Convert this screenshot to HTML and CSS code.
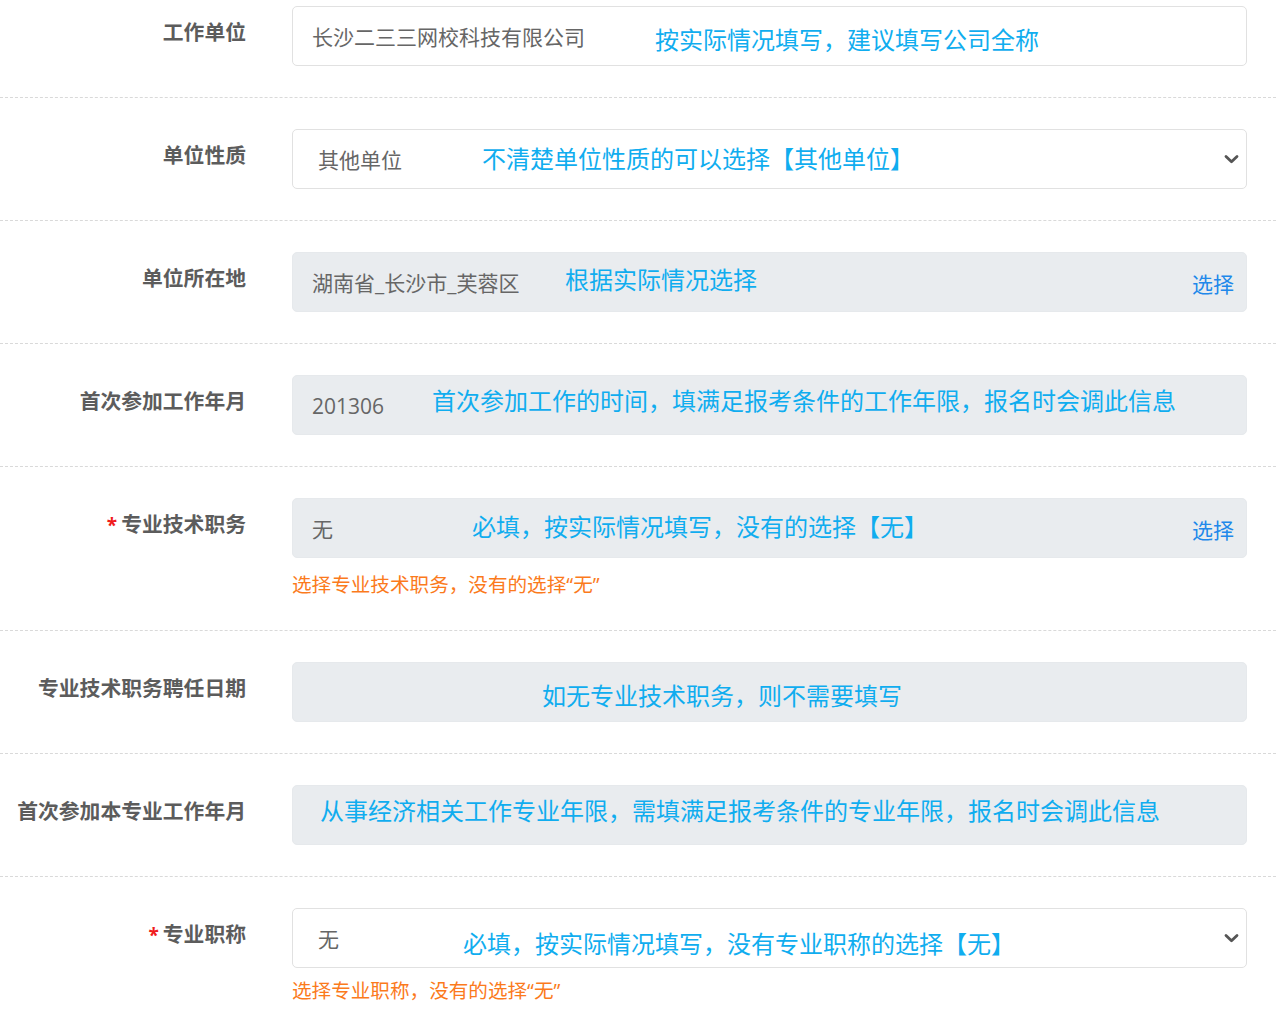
FILE: index.html
```html
<!DOCTYPE html>
<html lang="zh-CN">
<head>
<meta charset="utf-8">
<title>工作信息</title>
<link rel="stylesheet" href="styles.css">
</head>
<body>
<div class="form">
  <div class="row">
    <div class="label">工作单位</div>
    <div class="ctrl">
      <div class="field">
        <span class="value">长沙二三三网校科技有限公司</span>
        <span class="note n1">按实际情况填写，建议填写公司全称</span>
      </div>
    </div>
  </div>
  <div class="row">
    <div class="label">单位性质</div>
    <div class="ctrl">
      <div class="field">
        <span class="value v-sel">其他单位</span>
        <span class="note n2">不清楚单位性质的可以选择【其他单位】</span>
        <svg class="caret" width="15" height="10" viewBox="0 0 15 10"><path d="M2 2.5 L7.5 7.8 L13 2.5" fill="none" stroke="#555" stroke-width="2.8" stroke-linecap="round" stroke-linejoin="round"/></svg>
      </div>
    </div>
  </div>
  <div class="row">
    <div class="label">单位所在地</div>
    <div class="ctrl">
      <div class="field disabled">
        <span class="value">湖南省_长沙市_芙蓉区</span>
        <span class="note n3">根据实际情况选择</span>
        <span class="pick">选择</span>
      </div>
    </div>
  </div>
  <div class="row">
    <div class="label">首次参加工作年月</div>
    <div class="ctrl">
      <div class="field disabled">
        <span class="value">201306</span>
        <span class="note n4">首次参加工作的时间，填满足报考条件的工作年限，报名时会调此信息</span>
      </div>
    </div>
  </div>
  <div class="row">
    <div class="label"><span class="req">*</span>专业技术职务</div>
    <div class="ctrl">
      <div class="field disabled">
        <span class="value">无</span>
        <span class="note n5">必填，按实际情况填写，没有的选择【无】</span>
        <span class="pick">选择</span>
      </div>
      <div class="hint">选择专业技术职务，没有的选择“无”</div>
    </div>
  </div>
  <div class="row">
    <div class="label">专业技术职务聘任日期</div>
    <div class="ctrl">
      <div class="field disabled">
        <span class="note n6">如无专业技术职务，则不需要填写</span>
      </div>
    </div>
  </div>
  <div class="row">
    <div class="label">首次参加本专业工作年月</div>
    <div class="ctrl">
      <div class="field disabled">
        <span class="note n7">从事经济相关工作专业年限，需填满足报考条件的专业年限，报名时会调此信息</span>
      </div>
    </div>
  </div>
  <div class="row">
    <div class="label"><span class="req">*</span>专业职称</div>
    <div class="ctrl">
      <div class="field">
        <span class="value v-sel">无</span>
        <span class="note n8">必填，按实际情况填写，没有专业职称的选择【无】</span>
        <svg class="caret" width="15" height="10" viewBox="0 0 15 10"><path d="M2 2.5 L7.5 7.8 L13 2.5" fill="none" stroke="#555" stroke-width="2.8" stroke-linecap="round" stroke-linejoin="round"/></svg>
      </div>
      <div class="hint hint-last">选择专业职称，没有的选择“无”</div>
    </div>
  </div>
</div>
</body>
</html>
```

FILE: styles.css
```css
html, body {
  margin: 0;
  padding: 0;
  background: #fff;
}
body {
  font-family: "Open Sans", "Noto Sans CJK SC", sans-serif;
  color: #666;
  width: 1276px;
  overflow: hidden;
}
.form {
  display: flex;
  flex-direction: column;
}
.row {
  display: grid;
  grid-template-columns: 246px 955px;
  column-gap: 46px;
  padding: 31px 0 31px;
  border-bottom: 1px dashed #d9d9d9;
}
.row:first-child {
  padding-top: 6px;
}
.label {
  text-align: right;
  font-size: 20.8px;
  font-weight: 700;
  color: #5c5c5c;
  line-height: 30px;
  padding-top: 11px;
  white-space: nowrap;
}
.req {
  color: #f01c1c;
  font-size: 19px;
  margin-right: 4px;
}
.ctrl {
  display: flex;
  flex-direction: column;
}
.field {
  position: relative;
  height: 60px;
  box-sizing: border-box;
  border: 1px solid #e1e1e1;
  border-radius: 5px;
  background: #fff;
  display: flex;
  align-items: center;
  padding: 0 12px 0 19px;
}
.field.disabled {
  background: #e9ecef;
  border-color: #e6e9ec;
}
.value {
  font-size: 21px;
  color: #666;
  line-height: 30px;
  margin-top: 1px;
}
.v-sel {
  margin-left: 6px;
}
.note {
  position: absolute;
  top: 15px;
  font-size: 24px;
  line-height: 30px;
  color: #10adef;
  white-space: nowrap;
}
.n1 { left: 362px; top: 18px; }
.n2 { left: 189px; top: 14px; }
.n3 { left: 272px; top: 12px; }
.n4 { left: 139px; top: 10px; }
.n5 { left: 179px; top: 13px; }
.n6 { left: 249px; top: 18px; }
.n7 { left: 27px; top: 10px; }
.n8 { left: 170px; top: 20px; }
.pick {
  margin-left: auto;
  font-size: 21px;
  color: #2188ea;
  line-height: 30px;
  margin-top: 3px;
}
.caret {
  margin-left: auto;
  margin-right: -5px;
}
.hint {
  margin-top: 13px;
  font-size: 19.6px;
  line-height: 28px;
  color: #fb7a1c;
}
.hint-last {
  margin-top: 9px;
}
```
